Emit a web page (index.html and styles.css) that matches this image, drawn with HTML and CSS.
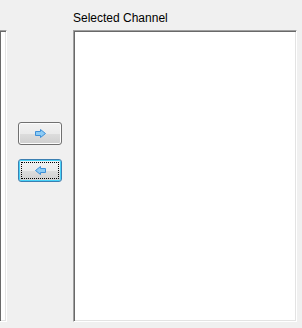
FILE: index.html
```html
<!DOCTYPE html>
<html lang="en">
<head>
    <meta charset="UTF-8">
    <meta name="viewport" content="width=device-width, initial-scale=1.0">
    <title>Channels</title>
    <link rel="stylesheet" href="styles.css">
</head>
<body>
    <div class="page">
        <div class="list-box left-list"></div>

        <div class="middle">
            <button type="button" class="move-btn">
                <svg width="11" height="9" viewBox="0 0 11 9">
                    <polygon points="0.5,2.5 5.5,2.5 5.5,0.5 10.5,4.5 5.5,8.5 5.5,6.5 0.5,6.5" fill="#8ccbf5" stroke="#3d8fd8" stroke-width="1"/>
                </svg>
            </button>
            <button type="button" class="move-btn focused">
                <svg width="11" height="9" viewBox="0 0 11 9">
                    <polygon points="10.5,2.5 5.5,2.5 5.5,0.5 0.5,4.5 5.5,8.5 5.5,6.5 10.5,6.5" fill="#8ccbf5" stroke="#3d8fd8" stroke-width="1"/>
                </svg>
            </button>
        </div>

        <div class="right-panel">
            <div class="panel-label">Selected Channel</div>
            <div class="list-box right-list"></div>
        </div>
    </div>
</body>
</html>
```

FILE: styles.css
```css
body {
    font-family: "Liberation Sans", Arial, sans-serif;
    background-color: #f0f0f0;
    margin: 0;
}

.page {
    display: flex;
    height: 328px;
    width: 302px;
}

.list-box {
    box-sizing: border-box;
    background-color: #fff;
    border: 1px solid;
    border-color: #a0a0a0 #ffffff #ffffff #a0a0a0;
    box-shadow: inset 1px 1px 0 #696969, inset -1px -1px 0 #e3e3e3;
}

.left-list {
    width: 7px;
    height: 292px;
    margin-top: 30px;
    border-left: none;
}

.middle {
    width: 66px;
    display: flex;
    flex-direction: column;
    gap: 14px;
    padding-top: 122px;
    box-sizing: border-box;
}

.move-btn {
    width: 44px;
    height: 23px;
    margin-left: 11px;
    padding: 0;
    border: 1px solid #707070;
    border-radius: 3px;
    background: linear-gradient(#f2f2f2 0%, #ebebeb 50%, #dddddd 51%, #cfcfcf 100%);
    box-shadow: inset 0 0 0 1px #fcfcfc;
    display: flex;
    justify-content: center;
    align-items: center;
}

.move-btn svg {
    display: block;
}

.focused {
    border-color: #3c7fb1;
    box-shadow: inset 0 0 0 1px #48d2f8;
    outline: 1px dotted #000;
    outline-offset: -4px;
}

.right-panel {
    width: 224px;
    display: flex;
    flex-direction: column;
}

.panel-label {
    height: 30px;
    box-sizing: border-box;
    padding-top: 11px;
    font-size: 12px;
    line-height: 14px;
    color: #000;
}

.right-list {
    height: 292px;
}
```
